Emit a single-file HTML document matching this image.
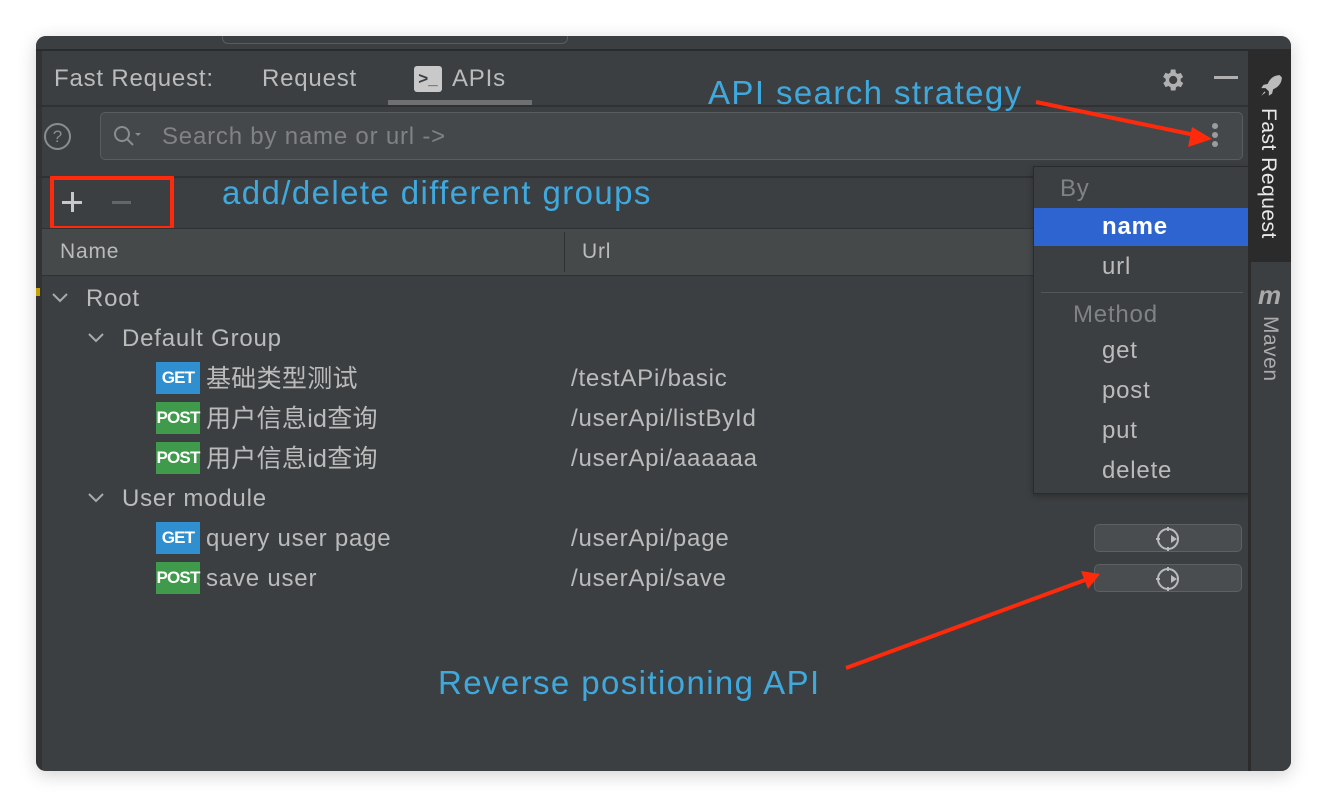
<!DOCTYPE html>
<html><head><meta charset="utf-8"><style>
*{margin:0;padding:0;box-sizing:border-box}
body{width:1328px;height:808px;background:#fff;position:relative;overflow:hidden;font-family:"Liberation Sans","Noto Sans CJK SC",sans-serif}
.win{position:absolute;left:36px;top:36px;width:1255px;height:735px;background:#3c3f41;border-radius:10px;overflow:hidden;box-shadow:0 4px 18px rgba(0,0,0,.18)}
.a{position:absolute}
.t{position:absolute;color:#bbbbbb;font-size:24px;line-height:28px;letter-spacing:0.8px;white-space:nowrap}
.blue{color:#3fa9de;font-size:33px;letter-spacing:1.4px;position:absolute;white-space:nowrap}
.badge{position:absolute;width:44px;height:32px;color:#fff;font-weight:bold;font-size:17px;text-align:center;line-height:32px;letter-spacing:-0.8px}
.get{background:#2f8fcf}.post{background:#3f9a4b}
.btn{position:absolute;left:1058px;width:148px;height:28px;border:1px solid #5e6163;border-radius:5px;background:#4a4d50}
.cjk{letter-spacing:0.3px;font-size:25px}
</style></head><body>
<div class="win">
  <div class="a" style="left:0;top:0;width:1255px;height:15px;background:#3c3f41;border-bottom:2px solid #2b2b2b"></div>
  <div class="a" style="left:186px;top:-6px;width:346px;height:14px;border:1px solid #5a5d5f;border-radius:6px"></div>
  <div class="a" style="left:0;top:15px;width:6px;height:720px;background:#313335"></div>
  <div class="t" style="left:18px;top:29px">Fast Request:</div>
  <div class="t" style="left:226px;top:29px">Request</div>
  <div class="a" style="left:378px;top:30px;width:28px;height:26px;background:#c9c9c9;border-radius:3px;color:#3c3f41;font-weight:bold;font-size:17px;line-height:26px;text-align:center">&gt;_</div>
  <div class="t" style="left:416px;top:29px">APIs</div>
  <div class="a" style="left:352px;top:64px;width:144px;height:5px;background:#6e7072"></div>
  <div class="a" style="left:0;top:69px;width:1214px;height:2px;background:#2f3133"></div>
  <svg class="a" style="left:1122px;top:30px" width="28" height="28" viewBox="0 0 24 24"><path fill="#b0b0b0" d="M19.4 13a7.5 7.5 0 0 0 0-2l2.1-1.6-2-3.5-2.5 1a7 7 0 0 0-1.7-1L15 3h-4l-.4 2.8a7 7 0 0 0-1.7 1l-2.5-1-2 3.5L6.6 11a7.5 7.5 0 0 0 0 2l-2.1 1.6 2 3.5 2.5-1a7 7 0 0 0 1.7 1L11 21h4l.4-2.8a7 7 0 0 0 1.7-1l2.5 1 2-3.5zM13 15.5a3.5 3.5 0 1 1 0-7 3.5 3.5 0 0 1 0 7z"/></svg>
  <div class="a" style="left:1178px;top:40px;width:24px;height:3px;background:#b0b0b0"></div>
  <div class="a" style="left:8px;top:87px;width:27px;height:27px;border:2px solid #8a8c8e;border-radius:50%;color:#8a8c8e;font-size:17px;text-align:center;line-height:23px">?</div>
  <div class="a" style="left:64px;top:76px;width:1143px;height:48px;border:1px solid #5a5d5f;border-radius:5px;background:#45484a"></div>
  <svg class="a" style="left:76px;top:88px" width="32" height="24"><circle cx="10" cy="10" r="7" stroke="#8a8c8e" stroke-width="2" fill="none"/><line x1="15" y1="15" x2="21" y2="21" stroke="#8a8c8e" stroke-width="2"/><path d="M23 9h6l-3 3z" fill="#8a8c8e"/></svg>
  <div class="t" style="left:126px;top:87px;color:#808284">Search by name or url -&gt;</div>
  <div class="a" style="left:1176px;top:87px;width:6px;height:6px;border-radius:50%;background:#9a9c9e"></div>
  <div class="a" style="left:1176px;top:96px;width:6px;height:6px;border-radius:50%;background:#9a9c9e"></div>
  <div class="a" style="left:1176px;top:105px;width:6px;height:6px;border-radius:50%;background:#9a9c9e"></div>
  <div class="a" style="left:0;top:140px;width:1214px;height:2px;background:#2f3133"></div>
  <div class="a" style="left:14px;top:140px;width:124px;height:54px;border:4px solid #ff2a0c"></div>
  <div class="a" style="left:26px;top:165px;width:20px;height:3px;background:#c8c8c8"></div>
  <div class="a" style="left:34.5px;top:156px;width:3px;height:20px;background:#c8c8c8"></div>
  <div class="a" style="left:76px;top:165px;width:19px;height:3px;background:#646668"></div>
  <div class="blue" style="left:186px;top:138px">add/delete different groups</div>
  <div class="a" style="left:6px;top:192px;width:1208px;height:48px;background:#45494a;border-top:1px solid #2f3133;border-bottom:1px solid #2f3133"></div>
  <div class="a" style="left:528px;top:196px;width:1px;height:40px;background:#2f3133"></div>
  <div class="t" style="left:24px;top:202px;font-size:21px">Name</div>
  <div class="t" style="left:546px;top:202px;font-size:21px">Url</div>
  <svg class="a" style="left:16px;top:256px" width="16" height="12"><path d="M1 2l7 7 7-7" stroke="#aaa" stroke-width="2" fill="none"/></svg>
  <div class="t" style="left:50px;top:249px">Root</div>
  <svg class="a" style="left:52px;top:296px" width="16" height="12"><path d="M1 2l7 7 7-7" stroke="#aaa" stroke-width="2" fill="none"/></svg>
  <div class="t" style="left:86px;top:289px">Default Group</div>
  <div class="badge get" style="left:120px;top:326px">GET</div><div class="t cjk" style="left:170px;top:329px">基础类型测试</div><div class="t" style="left:535px;top:329px">/testAPi/basic</div>
  <div class="badge post" style="left:120px;top:366px">POST</div><div class="t cjk" style="left:170px;top:369px">用户信息id查询</div><div class="t" style="left:535px;top:369px">/userApi/listById</div>
  <div class="badge post" style="left:120px;top:406px">POST</div><div class="t cjk" style="left:170px;top:409px">用户信息id查询</div><div class="t" style="left:535px;top:409px">/userApi/aaaaaa</div>
  <svg class="a" style="left:52px;top:456px" width="16" height="12"><path d="M1 2l7 7 7-7" stroke="#aaa" stroke-width="2" fill="none"/></svg>
  <div class="t" style="left:86px;top:449px">User module</div>
  <div class="badge get" style="left:120px;top:486px">GET</div><div class="t" style="left:170px;top:489px">query user page</div><div class="t" style="left:535px;top:489px">/userApi/page</div>
  <div class="badge post" style="left:120px;top:526px">POST</div><div class="t" style="left:170px;top:529px">save user</div><div class="t" style="left:535px;top:529px">/userApi/save</div>
  <div class="btn" style="top:488px"></div><div class="btn" style="top:528px"></div>
  <svg class="a" style="left:1118px;top:490px" width="28" height="26"><circle cx="14" cy="13" r="10" stroke="#bbb" stroke-width="2" fill="none"/><path d="M14 1v4M14 21v4M2 13h4" stroke="#bbb" stroke-width="2"/><path d="M17 9l6 4-6 4z" fill="#bbb"/></svg>
  <svg class="a" style="left:1118px;top:530px" width="28" height="26"><circle cx="14" cy="13" r="10" stroke="#bbb" stroke-width="2" fill="none"/><path d="M14 1v4M14 21v4M2 13h4" stroke="#bbb" stroke-width="2"/><path d="M17 9l6 4-6 4z" fill="#bbb"/></svg>
  <div class="a" style="left:997px;top:130px;width:217px;height:328px;background:#3c3f41;border:1px solid #2b2b2b;box-shadow:0 2px 6px rgba(0,0,0,.3)"></div>
  <div class="t" style="left:1024px;top:139px;color:#808284">By</div>
  <div class="a" style="left:998px;top:172px;width:216px;height:38px;background:#2e64d0"></div>
  <div class="t" style="left:1066px;top:177px;color:#fff;font-weight:bold">name</div>
  <div class="t" style="left:1066px;top:217px">url</div>
  <div class="a" style="left:1005px;top:256px;width:202px;height:1px;background:#55585a"></div>
  <div class="t" style="left:1037px;top:265px;color:#808284">Method</div>
  <div class="t" style="left:1066px;top:301px">get</div>
  <div class="t" style="left:1066px;top:341px">post</div>
  <div class="t" style="left:1066px;top:381px">put</div>
  <div class="t" style="left:1066px;top:421px">delete</div>
  <div class="a" style="left:1212px;top:15px;width:3px;height:720px;background:#2b2b2b"></div>
  <div class="a" style="left:1215px;top:15px;width:40px;height:720px;background:#3c3f41"></div>
  <div class="a" style="left:1215px;top:15px;width:40px;height:211px;background:#2b2b2b"></div>
  <svg class="a" style="left:1222px;top:36px" width="26" height="28" viewBox="0 0 24 24"><path fill="#bbb" d="M20 2c-5 0-9 3-11 8l-4 1-2 3 4 0 3 3 0 4 3-2 1-4c5-2 8-6 8-11zM6 17l-3 4 4-3z"/></svg>
  <div class="a" style="left:1220px;top:72px;writing-mode:vertical-rl;color:#e8e8e8;font-size:21px;letter-spacing:0.5px;white-space:nowrap">Fast Request</div>
  <div class="a" style="left:1222px;top:244px;color:#aaa;font-size:26px;font-weight:bold;font-style:italic">m</div>
  <div class="a" style="left:1222px;top:280px;writing-mode:vertical-rl;color:#aaa;font-size:21px;letter-spacing:0.5px;white-space:nowrap">Maven</div>
  <div class="a" style="left:0;top:252px;width:4px;height:8px;background:#c9a200"></div>
</div>
<div class="blue" style="left:708px;top:74px">API search strategy</div>
<div class="blue" style="left:438px;top:664px">Reverse positioning API</div>
<svg class="a" style="left:0;top:0" width="1328" height="808">
  <line x1="1036" y1="102" x2="1195" y2="135" stroke="#ff2a0c" stroke-width="4"/>
  <path d="M1212 139l-24 8 4-20z" fill="#ff2a0c"/>
  <line x1="846" y1="668" x2="1085" y2="580" stroke="#ff2a0c" stroke-width="4"/>
  <path d="M1100 574l-19-3 7 18z" fill="#ff2a0c"/>
</svg>
</body></html>
